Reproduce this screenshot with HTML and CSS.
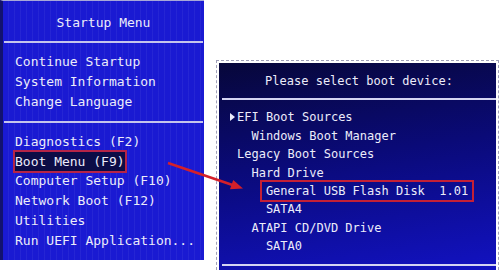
FILE: index.html
```html
<html>
<head>
    <title>Boot Menu</title>
    <link rel="stylesheet" href="styles.css">
</head>
<body>
    <div class="screen">
        <div class="menu">
            <div class="menu-title">Startup Menu</div>
            <div class="menu-group">
                <div class="item">Continue Startup</div>
                <div class="item">System Information</div>
                <div class="item">Change Language</div>
            </div>
            <div class="menu-group keys">
                <div class="item">Diagnostics (F2)</div>
                <div class="item active">Boot Menu (F9)</div>
                <div class="item">Computer Setup (F10)</div>
                <div class="item">Network Boot (F12)</div>
                <div class="item">Utilities</div>
                <div class="item">Run UEFI Application...</div>
            </div>
        </div>
        <div class="boot-frame">
            <div class="boot">
                <div class="boot-title">Please select boot device:</div>
                <div class="boot-list">
                    <div class="entry"><span class="pointer"></span>EFI Boot Sources</div>
                    <div class="entry lvl1">Windows Boot Manager</div>
                    <div class="entry">Legacy Boot Sources</div>
                    <div class="entry lvl1">Hard Drive</div>
                    <div class="entry lvl2"><span class="marked">General USB Flash Disk  1.01</span></div>
                    <div class="entry lvl2">SATA4</div>
                    <div class="entry lvl1">ATAPI CD/DVD Drive</div>
                    <div class="entry lvl2">SATA0</div>
                </div>
            </div>
        </div>
        <svg class="arrow" width="500" height="270" viewBox="0 0 500 270">
            <line x1="168" y1="163" x2="234" y2="185.5" stroke="#d4202a" stroke-width="2.5"/>
            <polygon points="243,188.5 233.2,179.9 230,189.3" fill="#d4202a"/>
        </svg>
    </div>
</body>
</html>
```

FILE: styles.css
```css
html, body {
    margin: 0;
    background: #ffffff;
    overflow: hidden;
}
.screen {
    position: relative;
    display: flex;
    align-items: flex-start;
    width: 500px;
    height: 270px;
    font-family: "DejaVu Sans Mono", "Liberation Mono", monospace;
    color: #ececfa;
}
.menu {
    box-sizing: border-box;
    width: 204px;
    height: 260px;
    border-left: 3px solid #12126e;
    border-top: 1px solid #a8a8d8;
    background-color: #1a1ad2;
    background-image: repeating-linear-gradient(90deg, transparent 0 5px, rgba(255,255,255,0.05) 5px 6px);
    font-size: 13px;
}
.menu-title {
    text-align: center;
    padding: 12px 0 8px;
    line-height: 20px;
    border-bottom: 2px solid #c4c4ec;
    margin: 0 1px;
}
.menu-group {
    padding: 9px 0 9px 11px;
    line-height: 20px;
    border-bottom: 2px solid #c4c4ec;
    margin: 0 1px;
}
.menu-group.keys {
    border-bottom: none;
    line-height: 19.7px;
}
.item.active {
    width: fit-content;
    background: #0c0c46;
    outline: 2px solid #b52447;
}
.boot-frame {
    margin: 60px 0 0 12px;
    width: 283px;
    box-sizing: border-box;
    border: 1px dashed #a0a0b8;
    border-bottom: none;
    padding: 2px 2px 0;
}
.boot {
    height: 207px;
    overflow: hidden;
    background: linear-gradient(172deg, #07073a 0%, #0a0a78 45%, #1212c2 100%);
    font-size: 12px;
    line-height: 18.4px;
}
.boot-title {
    text-align: center;
    padding: 9.4px 0 7.2px;
    border-bottom: 2px solid #d4d4f2;
    margin-left: 3px;
}
.boot-list {
    padding: 8.4px 0 8px 15px;
    border-bottom: 2px solid #d4d4f2;
    margin-left: 3px;
}
.entry.lvl1 {
    padding-left: 2ch;
}
.entry.lvl2 {
    padding-left: 4ch;
}
.pointer {
    display: inline-block;
    width: 0;
    height: 0;
    margin-left: -7px;
    margin-right: 2px;
    border-left: 5px solid #ececfa;
    border-top: 4px solid transparent;
    border-bottom: 4px solid transparent;
}
.marked {
    display: inline-block;
    white-space: pre;
    padding: 0 4px;
    margin-left: -4px;
    outline: 2px solid #c42036;
}
.arrow {
    position: absolute;
    left: 0;
    top: 0;
    pointer-events: none;
}
```
